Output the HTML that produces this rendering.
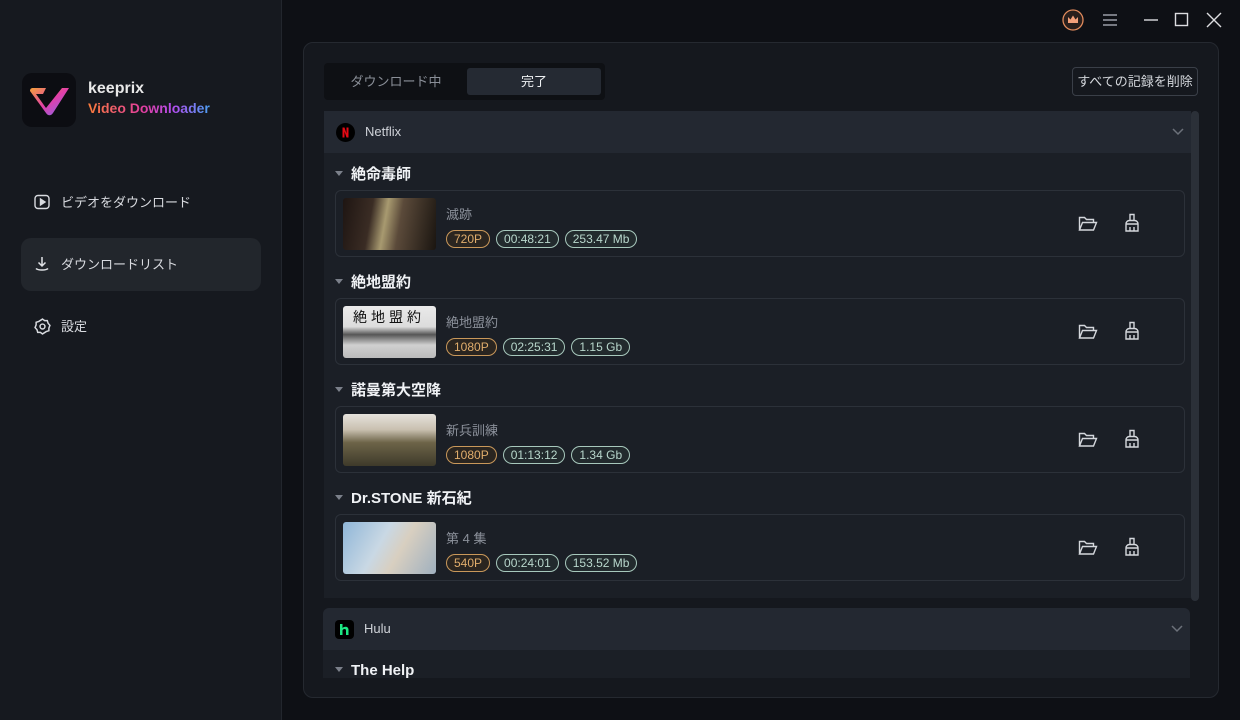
<!DOCTYPE html>
<html><head><meta charset="utf-8"><style>
*{margin:0;padding:0;box-sizing:border-box}
body{width:1240px;height:720px;background:#0e1015;font-family:"Liberation Sans","Noto Sans CJK JP",sans-serif;position:relative;overflow:hidden;color:#e6e8ec}
.side{position:absolute;left:0;top:0;width:282px;height:720px;background:#16191f;border-right:1px solid #22262d}
.logo{position:absolute;left:22px;top:73px;width:54px;height:54px;border-radius:10px;background:#0c0d12}
.brand{position:absolute;left:88px;top:80px;font-weight:bold;font-size:16px;color:#e8e8e8}
.brand2{position:absolute;left:88px;top:100px;font-weight:bold;font-size:14px;background:linear-gradient(90deg,#f97b3a,#e43ea0 45%,#b24ef0 70%,#4aa0f2);-webkit-background-clip:text;color:transparent}
.nav{position:absolute;left:21px;width:240px;height:53px;border-radius:10px;font-size:13px;color:#d8dadf;padding-left:40px;line-height:53px}
.nav svg{position:absolute;left:13px;top:18px}
.panel{position:absolute;left:303px;top:42px;width:916px;height:656px;background:#15181e;border:1px solid #252930;border-radius:10px;overflow:hidden}
.tabs{position:absolute;left:20px;top:20px;width:281px;height:37px;background:#0e1014;border-radius:4px}
.tab{position:absolute;top:5px;height:27px;line-height:27px;font-size:13px;text-align:center}
.del{position:absolute;left:768px;top:24px;width:126px;height:29px;border:1px solid #3a3f48;border-radius:4px;font-size:13px;line-height:27px;text-align:center;color:#d4d7dc}
.grp{position:absolute;left:20px;width:867px;background:#1b1f26;border-radius:6px 6px 0 0}
.gh{height:42px;background:#232831;position:relative;font-size:13px;color:#cfd2d8;line-height:42px;padding-left:41px}
.ic{position:absolute;left:12px;top:12px;width:19px;height:19px}
.chev{position:absolute;right:6px;top:14px}
.st{position:absolute;left:12px;font-size:15px;font-weight:bold;color:#f0f2f5}
.st:before{content:"";display:inline-block;border-left:4px solid transparent;border-right:4px solid transparent;border-top:5px solid #7b808a;margin-right:8px;vertical-align:3px}
.card{position:absolute;left:12px;width:850px;height:67px;border:1px solid #2c3139;border-radius:6px}
.th{position:absolute;left:7px;top:7px;width:93px;height:52px;border-radius:3px;overflow:hidden}
.nm{position:absolute;left:110px;top:13px;font-size:13px;color:#8b909a}
.tags{position:absolute;left:110px;top:39px;display:flex;gap:6px}
.tg{height:18px;border-radius:9px;border:1px solid #a7c8bc;color:#b8d7cc;font-size:12px;line-height:16px;padding:0 7px;background:#222a2d}
.tg.q{border-color:#c9985a;color:#e0ad6c;background:#2a2520}
.scroll{position:absolute;left:887px;top:68px;width:8px;height:490px;background:#2b3038;border-radius:4px}
.a1{position:absolute}
</style></head><body>
<div class="side">
 <div class="logo"><svg width="54" height="54" viewBox="0 0 54 54"><defs><linearGradient id="lg" x1="0" y1="0" x2="1" y2="1"><stop offset="0" stop-color="#f5a23a"/><stop offset=".5" stop-color="#e23fa8"/><stop offset="1" stop-color="#7a6cf5"/></linearGradient></defs><path d="M8 18c0-2 1-3 3-3h13l-3 6h-7l10 14L40 15h7L31 40c-2 3-5 3-7 0z" fill="url(#lg)"/></svg></div>
 <div class="brand">keeprix</div>
 <div class="brand2">Video Downloader</div>
 <div class="nav" style="top:176px"><svg width="16" height="16" viewBox="0 0 16 16" fill="none" stroke="#d8dadf" stroke-width="1.4"><rect x="1" y="1.5" width="14" height="13" rx="3"/><path d="M6.5 5v6l4.5-3z" fill="#d8dadf"/></svg>ビデオをダウンロード</div>
 <div class="nav" style="top:238px;background:#22262c"><svg width="16" height="16" viewBox="0 0 16 16" fill="none" stroke="#e0e2e6" stroke-width="1.5"><path d="M8 1v9M4.5 6.5 8 10l3.5-3.5M2 12.5c2 2 10 2 12 0"/></svg>ダウンロードリスト</div>
 <div class="nav" style="top:300px"><svg width="17" height="17" viewBox="0 0 16 16" fill="none" stroke="#d8dadf" stroke-width="1.4"><path d="M8 1l2 1.5h2.5l.8 2.5 1.7 2-1 2.5v2.5l-2.5.8L8 15l-2-1.5H3.5L2.8 11 1 9l1-2.5V4l2.5-.8z"/><circle cx="8" cy="8" r="2.3"/></svg>設定</div>
</div>
<svg style="position:absolute;left:1062px;top:9px" width="22" height="22" viewBox="0 0 22 22"><circle cx="11" cy="11" r="10" fill="#2a1f1c" stroke="#e08a5c" stroke-width="1.3"/><path d="M6 8l2.5 2.5L11 6.5l2.5 4L16 8v6H6z" fill="#f4a07a"/></svg>
<svg style="position:absolute;left:1102px;top:13px" width="16" height="14"><path d="M1 2h14M1 7h14M1 12h14" stroke="#9a9ea6" stroke-width="1.5"/></svg>
<svg style="position:absolute;left:1143px;top:12px" width="16" height="16"><path d="M1 8h14" stroke="#dcdde0" stroke-width="1.4"/></svg>
<svg style="position:absolute;left:1174px;top:12px" width="16" height="16"><rect x="1.5" y="1.5" width="12" height="12" fill="none" stroke="#dcdde0" stroke-width="1.4"/></svg>
<svg style="position:absolute;left:1206px;top:12px" width="16" height="16"><path d="M1 1l14 14M15 1L1 15" stroke="#dcdde0" stroke-width="1.4"/></svg>
<div class="panel">
 <div class="tabs"><div class="tab" style="left:5px;width:134px;color:#8a8f98">ダウンロード中</div><div class="tab" style="left:143px;width:134px;background:#252a33;border-radius:3px;color:#eef0f3">完了</div></div>
 <div class="del">すべての記録を削除</div>
 <div class="grp" style="top:68px;height:487px">
  <div class="gh"><svg class="ic" viewBox="0 0 19 19"><circle cx="9.5" cy="9.5" r="9.5" fill="#000"/><path d="M6.5 4.5h2l2 6v-6h2v10h-2l-2-6v6h-2z" fill="#e50914"/></svg>Netflix<svg class="chev" width="14" height="14"><path d="M2 4l5 5 5-5" fill="none" stroke="#6c717a" stroke-width="1.5"/></svg></div>
 </div>
 <div class="scroll"></div>
</div>
<div style="position:absolute;left:323px;top:110px;width:867px;height:487px">
 <div class="st" style="top:53px">絶命毒師</div>
 <div class="card" style="top:80px"><div class="th" style="background:linear-gradient(100deg,#1e1512 0%,#3a2c24 30%,#a89a70 45%,#5b4a3a 60%,#1a1510 100%)"></div><div class="nm">滅跡</div><div class="tags"><span class="tg q">720P</span><span class="tg">00:48:21</span><span class="tg">253.47 Mb</span></div></div>
 <div class="st" style="top:161px">絶地盟約</div>
 <div class="card" style="top:188px"><div class="th" style="background:linear-gradient(180deg,#eaeaea 0%,#dcdcdc 40%,#555 55%,#d0d0d0 75%,#bbb 100%)"><span style="position:absolute;left:10px;top:1px;font-size:14px;color:#111;letter-spacing:4px">絶地盟約</span></div><div class="nm">絶地盟約</div><div class="tags"><span class="tg q">1080P</span><span class="tg">02:25:31</span><span class="tg">1.15 Gb</span></div></div>
 <div class="st" style="top:269px">諾曼第大空降</div>
 <div class="card" style="top:296px"><div class="th" style="background:linear-gradient(180deg,#e6e2dc 0%,#c9c0b0 30%,#6d6448 55%,#3e3a2a 100%)"></div><div class="nm">新兵訓練</div><div class="tags"><span class="tg q">1080P</span><span class="tg">01:13:12</span><span class="tg">1.34 Gb</span></div></div>
 <div class="st" style="top:377px">Dr.STONE 新石紀</div>
 <div class="card" style="top:404px"><div class="th" style="background:linear-gradient(120deg,#8fb6d8 0%,#c9d8e4 40%,#d8cfc0 60%,#9fb0bf 100%)"></div><div class="nm">第 4 集</div><div class="tags"><span class="tg q">540P</span><span class="tg">00:24:01</span><span class="tg">153.52 Mb</span></div></div>
</div>
<div style="position:absolute;left:323px;top:608px;width:867px;height:70px;background:#1b1f26;overflow:hidden;border-radius:6px 6px 0 0">
 <div class="gh"><svg class="ic" viewBox="0 0 19 19"><rect width="19" height="19" rx="4" fill="#000"/><path d="M5 4h2.5v4c1-1 2-1.3 3-1.3 2 0 3 1.2 3 3.3V15H11v-4.5c0-1-.5-1.5-1.5-1.5S7.5 9.7 7.5 10.6V15H5z" fill="#1ce783"/></svg>Hulu<svg class="chev" width="14" height="14"><path d="M2 4l5 5 5-5" fill="none" stroke="#6c717a" stroke-width="1.5"/></svg></div>
 <div class="st" style="top:54px">The Help</div>
</div>
<div style="position:absolute;left:0;top:0">
 <svg class="a1" style="left:1078px;top:215px" width="20" height="18" viewBox="0 0 20 18" fill="none" stroke="#d4d7dc" stroke-width="1.4"><path d="M1.5 15V2.5h5l2 2h7v3M1.5 15l3-7.5h14l-3 7.5z"/></svg>
 <svg class="a1" style="left:1123px;top:213px" width="18" height="20" viewBox="0 0 18 20" fill="none" stroke="#d4d7dc" stroke-width="1.4"><path d="M7 1.5h4v6H7zM3 11c0-2 1.5-3.5 3.5-3.5h5c2 0 3.5 1.5 3.5 3.5v7H3zM3 11h12M7 14v4M11 14v4"/></svg>
 <svg class="a1" style="left:1078px;top:323px" width="20" height="18" viewBox="0 0 20 18" fill="none" stroke="#d4d7dc" stroke-width="1.4"><path d="M1.5 15V2.5h5l2 2h7v3M1.5 15l3-7.5h14l-3 7.5z"/></svg>
 <svg class="a1" style="left:1123px;top:321px" width="18" height="20" viewBox="0 0 18 20" fill="none" stroke="#d4d7dc" stroke-width="1.4"><path d="M7 1.5h4v6H7zM3 11c0-2 1.5-3.5 3.5-3.5h5c2 0 3.5 1.5 3.5 3.5v7H3zM3 11h12M7 14v4M11 14v4"/></svg>
 <svg class="a1" style="left:1078px;top:431px" width="20" height="18" viewBox="0 0 20 18" fill="none" stroke="#d4d7dc" stroke-width="1.4"><path d="M1.5 15V2.5h5l2 2h7v3M1.5 15l3-7.5h14l-3 7.5z"/></svg>
 <svg class="a1" style="left:1123px;top:429px" width="18" height="20" viewBox="0 0 18 20" fill="none" stroke="#d4d7dc" stroke-width="1.4"><path d="M7 1.5h4v6H7zM3 11c0-2 1.5-3.5 3.5-3.5h5c2 0 3.5 1.5 3.5 3.5v7H3zM3 11h12M7 14v4M11 14v4"/></svg>
 <svg class="a1" style="left:1078px;top:539px" width="20" height="18" viewBox="0 0 20 18" fill="none" stroke="#d4d7dc" stroke-width="1.4"><path d="M1.5 15V2.5h5l2 2h7v3M1.5 15l3-7.5h14l-3 7.5z"/></svg>
 <svg class="a1" style="left:1123px;top:537px" width="18" height="20" viewBox="0 0 18 20" fill="none" stroke="#d4d7dc" stroke-width="1.4"><path d="M7 1.5h4v6H7zM3 11c0-2 1.5-3.5 3.5-3.5h5c2 0 3.5 1.5 3.5 3.5v7H3zM3 11h12M7 14v4M11 14v4"/></svg>
</div>
</body></html>
